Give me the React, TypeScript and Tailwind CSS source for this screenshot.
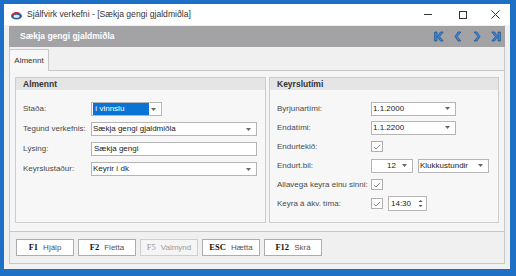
import React from "react";

const sans = "font-['Liberation_Sans',Arial,sans-serif]";

function Arrow() {
  return (
    <svg width="5" height="3" viewBox="0 0 5 3" className="shrink-0">
      <path d="M0 0 H5 L2.5 3 Z" fill="#666" />
    </svg>
  );
}

function Combo({ w, text, align = "left", selected = false }: { w: string; text: string; align?: "left" | "right"; selected?: boolean }) {
  return (
    <div className={`${w} h-[14px] bg-white border border-[#b5b5b5] flex items-center pr-[5px]`}>
      <div className={`flex-1 min-w-0 flex ${align === "right" ? "justify-end pr-[6px]" : "pl-[1px]"}`}>
        {selected ? (
          <span className="bg-[#0a74d6] text-white w-[56px] h-[12px] leading-[12px] pl-[2px] text-[8px]">{text}</span>
        ) : (
          <span className="text-[8px] leading-[12px] text-[#222] whitespace-nowrap">{text}</span>
        )}
      </div>
      <Arrow />
    </div>
  );
}

function Check() {
  return (
    <div className="w-[12px] h-[11px] bg-white border border-[#b0b0b0] flex items-center justify-center">
      <svg width="8" height="6" viewBox="0 0 8 6">
        <path d="M0.8 3 L3 5 L7.2 0.8" stroke="#7a7a7a" strokeWidth="0.9" fill="none" />
      </svg>
    </div>
  );
}

function Input({ w, text }: { w: string; text: string }) {
  return (
    <div className={`${w} h-[14px] bg-white border border-[#b5b5b5] flex items-center pl-[2px]`}>
      <span className="text-[8px] leading-[12px] text-[#222]">{text}</span>
    </div>
  );
}

function Row({ label, children, lw, h }: { label: string; children: React.ReactNode; lw: string; h: string }) {
  return (
    <div className={`${h} flex items-center`}>
      <div className={`${lw} shrink-0 text-[8px] text-[#4a4a4a] whitespace-nowrap`}>{label}</div>
      {children}
    </div>
  );
}

function Group({ title, w, children }: { title: string; w: string; children: React.ReactNode }) {
  return (
    <div className={`${w} h-[146px] border border-[#cdcdcd] bg-[#f7f7f7] flex flex-col`}>
      <div className="h-[12px] bg-[#e5e5e5] pl-[7px] text-[8.5px] leading-[12px] font-bold text-[#333]">{title}</div>
      <div className="pl-[7px] pt-[9px] flex flex-col">{children}</div>
    </div>
  );
}

function Btn({ k, label, disabled = false }: { k: string; label: string; disabled?: boolean }) {
  return (
    <div
      className={`w-[58px] h-[17px] border ${disabled ? "border-[#cfcfcf] bg-[#f5f5f5]" : "border-[#adadad] bg-white"} flex items-center justify-center gap-[5px]`}
    >
      <span className={`font-['Liberation_Serif',serif] font-bold text-[8.5px] ${disabled ? "text-[#9a9a9a] font-normal" : "text-[#111]"}`}>{k}</span>
      <span className={`text-[8px] ${disabled ? "text-[#9a9a9a]" : "text-[#555]"}`}>{label}</span>
    </div>
  );
}

function Nav({ d }: { d: string }) {
  return (
    <svg width="10" height="11" viewBox="0 0 10 11">
      <path d={d} fill="#3a8be0" stroke="#1c4a80" strokeWidth="0.7" strokeLinejoin="round" />
    </svg>
  );
}

export default function App() {
  return (
    <div className={`w-[516px] h-[276px] bg-[#1e70c6] pt-[4px] pl-[4px] pr-[6px] pb-[7px] ${sans}`}>
      <div className="h-full flex flex-col bg-[#f0f0f0]">
        {/* title bar */}
        <div className="h-[21px] bg-white flex items-center pl-[6px] shrink-0">
          <svg width="13" height="10" viewBox="0 0 13 10" className="mr-[4px]">
            <ellipse cx="6.5" cy="6" rx="5.5" ry="3.5" fill="#2a5ea8" />
            <path d="M1.5 5 Q4 0.5 11 3 Q6 2 3 6 Z" fill="#d8262a" />
            <ellipse cx="6.5" cy="6.3" rx="3" ry="1.5" fill="#e8eef7" />
          </svg>
          <span className="text-[8.6px] text-[#333]">Sjálfvirk verkefni - [Sækja gengi gjaldmiðla]</span>
          <div className="ml-auto flex items-center h-full">
            <div className="w-[35px] flex justify-center">
              <div className="w-[8px] h-px bg-[#333]" />
            </div>
            <div className="w-[35px] flex justify-center">
              <div className="w-[8px] h-[8px] border border-[#333]" />
            </div>
            <div className="w-[30px] flex justify-center">
              <svg width="9" height="9" viewBox="0 0 9 9">
                <path d="M0.5 0.5 L8.5 8.5 M8.5 0.5 L0.5 8.5" stroke="#333" strokeWidth="1" />
              </svg>
            </div>
          </div>
        </div>

        {/* content */}
        <div className="flex-1 px-[5px] pb-[5px] flex flex-col">
          <div className="mt-[1px] h-[21px] bg-[#a3a3a6] flex items-center pl-[11px] pr-[4px] shrink-0">
            <span className="text-[8.5px] font-bold text-white">Sækja gengi gjaldmiðla</span>
            <div className="ml-auto flex items-center gap-[9px]">
              <Nav d="M0.6 1 H3 V10 H0.6 Z M9.2 1 L5.6 5.5 L9.2 10 L6.4 10 L3.4 5.5 L6.4 1 Z" />
              <Nav d="M7.8 1 L4.2 5.5 L7.8 10 L5 10 L2 5.5 L5 1 Z" />
              <Nav d="M2.2 1 L5.8 5.5 L2.2 10 L5 10 L8 5.5 L5 1 Z" />
              <Nav d="M9.4 1 H7 V10 H9.4 Z M0.8 1 L4.4 5.5 L0.8 10 L3.6 10 L6.6 5.5 L3.6 1 Z" />
            </div>
          </div>

          <div className="flex-1 border-l border-r border-b border-[#c8c8c8] flex flex-col">
            {/* tabs */}
            <div className="h-[23px] pt-[2px] flex items-end shrink-0">
              <div className="w-[40px] h-[22px] -ml-px border border-b-0 border-[#c8c8c8] bg-[#f7f7f7] relative top-px flex items-center justify-center text-[8px] text-[#333]">
                Almennt
              </div>
            </div>
            {/* tab panel */}
            <div className="h-[162px] border-t border-b border-[#c8c8c8] bg-[#f5f5f5] pt-[6px] pl-[5px] flex gap-[3px] shrink-0">
              <Group title="Almennt" w="w-[251px]">
                <Row label="Staða:" lw="w-[68px]" h="h-[20px]">
                  <Combo w="w-[71px]" text="í vinnslu" selected />
                </Row>
                <Row label="Tegund verkefnis:" lw="w-[68px]" h="h-[20px]">
                  <Combo w="w-[166px]" text="Sækja gengi gjaldmiðla" />
                </Row>
                <Row label="Lýsing:" lw="w-[68px]" h="h-[20px]">
                  <Input w="w-[166px]" text="Sækja gengi" />
                </Row>
                <Row label="Keyrslustaður:" lw="w-[68px]" h="h-[20px]">
                  <Combo w="w-[166px]" text="Keyrir í dk" />
                </Row>
              </Group>
              <Group title="Keyrslutími" w="w-[230px]">
                <Row label="Byrjunartími:" lw="w-[94px]" h="h-[19px]">
                  <Combo w="w-[85px]" text="1.1.2000" />
                </Row>
                <Row label="Endatími:" lw="w-[94px]" h="h-[19px]">
                  <Combo w="w-[85px]" text="1.1.2200" />
                </Row>
                <Row label="Endurtekið:" lw="w-[94px]" h="h-[19px]">
                  <Check />
                </Row>
                <Row label="Endurt.bil:" lw="w-[94px]" h="h-[19px]">
                  <div className="flex items-center gap-[5px]">
                    <Combo w="w-[42px]" text="12" align="right" />
                    <Combo w="w-[71px]" text="Klukkustundir" />
                  </div>
                </Row>
                <Row label="Allavega keyra einu sinni:" lw="w-[94px]" h="h-[19px]">
                  <Check />
                </Row>
                <Row label="Keyra á ákv. tíma:" lw="w-[94px]" h="h-[19px]">
                  <div className="flex items-center gap-[5px]">
                    <Check />
                    <div className="w-[39px] h-[15px] bg-white border border-[#b5b5b5] flex items-center pl-[2px] pr-[3px]">
                      <span className="text-[8px] text-[#222]">14:30</span>
                      <svg width="5" height="9" viewBox="0 0 5 9" className="ml-auto">
                        <path d="M0.5 3 L2.5 1 L4.5 3 Z M0.5 6 L2.5 8 L4.5 6 Z" fill="#555" />
                      </svg>
                    </div>
                  </div>
                </Row>
              </Group>
            </div>
            {/* buttons */}
            <div className="pt-[7px] pl-[6px] flex gap-[4px]">
              <Btn k="F1" label="Hjálp" />
              <Btn k="F2" label="Fletta" />
              <Btn k="F5" label="Valmynd" disabled />
              <Btn k="ESC" label="Hætta" />
              <Btn k="F12" label="Skrá" />
            </div>
          </div>
        </div>
      </div>
    </div>
  );
}
